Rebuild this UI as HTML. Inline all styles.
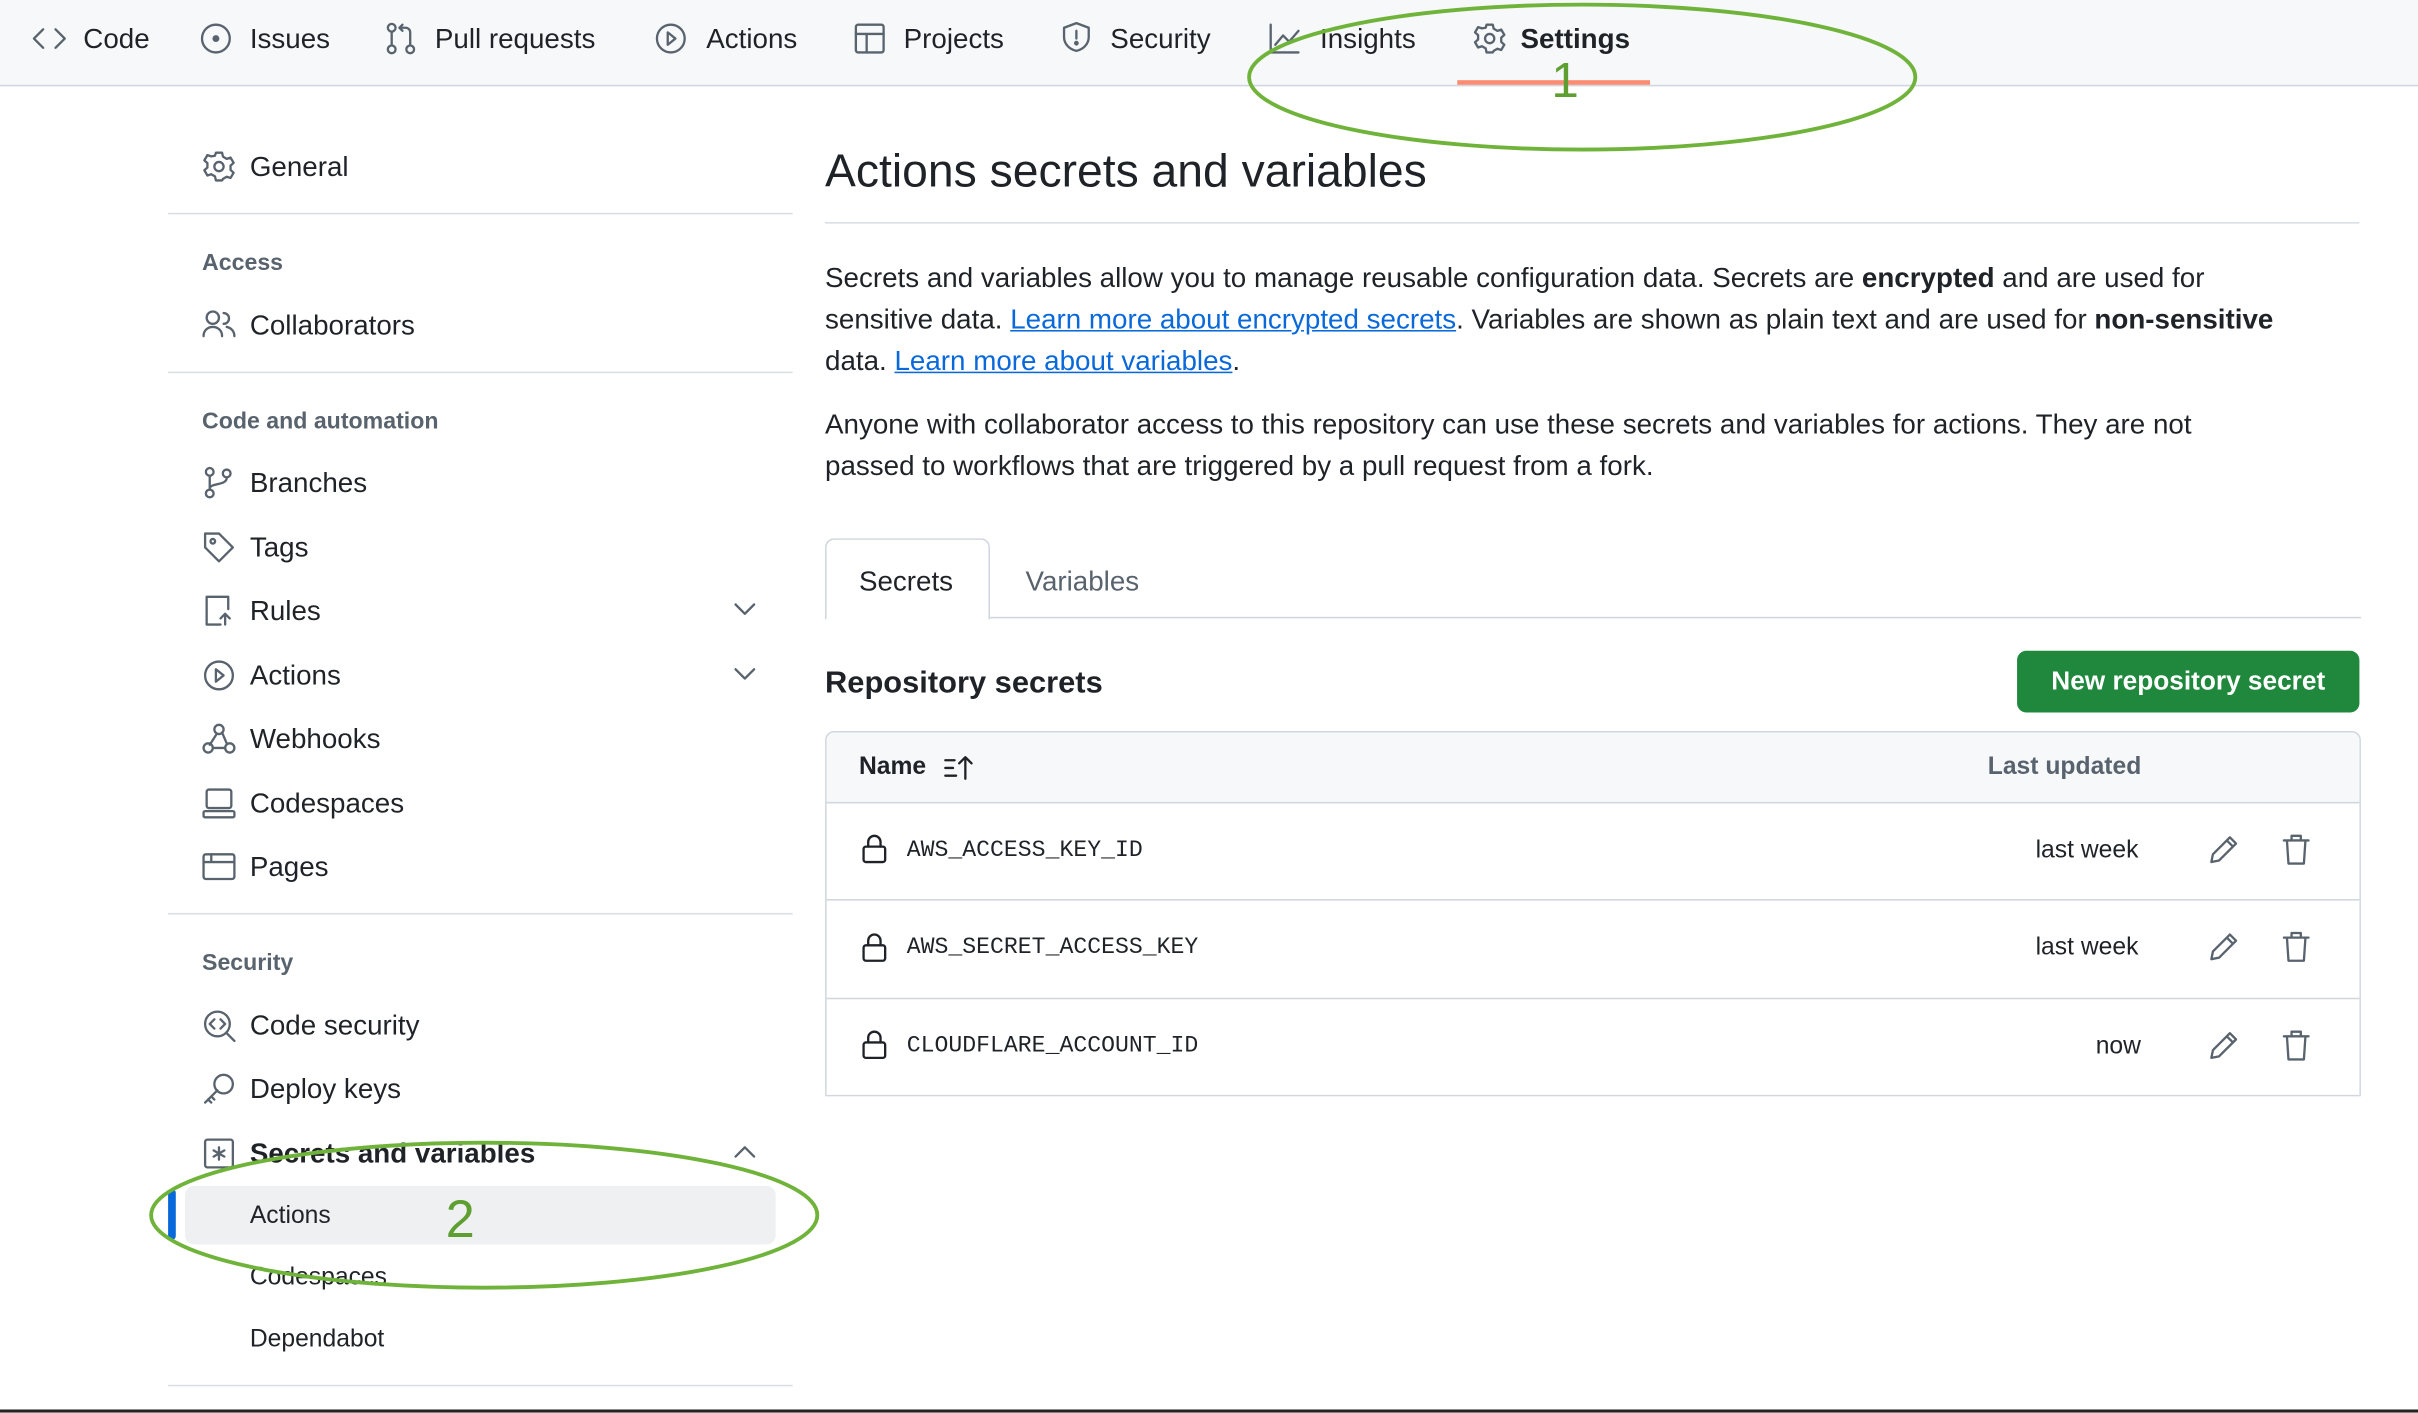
<!DOCTYPE html>
<html><head><meta charset="utf-8"><style>
html,body{margin:0;padding:0;background:#fff;overflow:hidden;width:2418px;height:1412px}
#w{position:absolute;left:0;top:0;width:1568px;height:916px;transform:scale(1.5421);transform-origin:0 0;font-family:"Liberation Sans",sans-serif;color:#1f2328}
.a{position:absolute;white-space:nowrap}
.nav{position:absolute;left:0;top:0;width:1568px;height:55px;background:#f6f8fa;border-bottom:1px solid #d0d7de}
.ni{font-size:18px;top:15px}
.ic{position:absolute;fill:none;stroke:#59636e;stroke-width:1.5;stroke-linecap:round;stroke-linejoin:round}
.s{font-size:18px}
.h{font-size:15px;font-weight:bold;color:#59636e}
.dv{position:absolute;left:109px;width:405px;height:1px;background:#d8dee4}
.p{font-size:18px;line-height:27px}
a{color:#0969da;text-decoration:underline}
.mono{font-family:"Liberation Mono",monospace;font-size:15px}
</style></head><body><div id="w">
<div class="nav"></div>
<svg class="ic" style="left:21px;top:16px" width="22" height="18" viewBox="0 0 22 18"><path d="M7 3L1 9l6 6M15 3l6 6-6 6"/></svg>
<div class="a ni" style="left:54px">Code</div>
<svg class="ic" style="left:129px;top:14px" width="22" height="22" viewBox="0 0 22 22"><circle cx="11" cy="11" r="9"/><circle cx="11" cy="11" r="1.5" fill="#59636e"/></svg>
<div class="a ni" style="left:162px">Issues</div>
<svg class="ic" style="left:249px;top:14px" width="22" height="22" viewBox="0 0 22 22"><circle cx="5" cy="4" r="2.5"/><circle cx="5" cy="18" r="2.5"/><circle cx="17" cy="18" r="2.5"/><path d="M5 7v8M17 15V7a3 3 0 0 0-3-3h-4M12 2l-2 2 2 2"/></svg>
<div class="a ni" style="left:282px">Pull requests</div>
<svg class="ic" style="left:424px;top:14px" width="22" height="22" viewBox="0 0 22 22"><circle cx="11" cy="11" r="9"/><path d="M9 7l5 4-5 4z"/></svg>
<div class="a ni" style="left:458px">Actions</div>
<svg class="ic" style="left:553px;top:14px" width="22" height="22" viewBox="0 0 22 22"><rect x="2" y="2" width="18" height="18" rx="1.5"/><path d="M2 8h18M9 8v12"/></svg>
<div class="a ni" style="left:586px">Projects</div>
<svg class="ic" style="left:687px;top:13px" width="22" height="22" viewBox="0 0 22 22"><path d="M11 2l8 3v6c0 5-4 8-8 9-4-1-8-4-8-9V5z M11 7v5"/><circle cx="11" cy="15" r=".8" fill="#59636e"/></svg>
<div class="a ni" style="left:720px">Security</div>
<svg class="ic" style="left:822px;top:14px" width="22" height="22" viewBox="0 0 22 22"><path d="M2 2v18h18M5 15l5-6 4 4 6-7"/></svg>
<div class="a ni" style="left:856px">Insights</div>
<svg class="ic" style="left:955px;top:14px" width="22" height="22" viewBox="0 0 22 22"><circle cx="11" cy="11" r="3"/><path d="M9 2h4l.6 2.6 2.4 1.4 2.5-.8 2 3.4-2 1.8v2.8l2 1.8-2 3.4-2.5-.8-2.4 1.4L13 20H9l-.6-2.6-2.4-1.4-2.5.8-2-3.4 2-1.8V8.8l-2-1.8 2-3.4 2.5.8L8.4 4z"/></svg>
<div class="a ni" style="left:986px;font-weight:bold">Settings</div>
<div class="a" style="left:945px;top:52px;width:125px;height:3px;background:#fd8c73"></div>

<!-- sidebar -->
<svg class="ic" style="left:131px;top:97px" width="22" height="22" viewBox="0 0 22 22"><circle cx="11" cy="11" r="3"/><path d="M9 2h4l.6 2.6 2.4 1.4 2.5-.8 2 3.4-2 1.8v2.8l2 1.8-2 3.4-2.5-.8-2.4 1.4L13 20H9l-.6-2.6-2.4-1.4-2.5.8-2-3.4 2-1.8V8.8l-2-1.8 2-3.4 2.5.8L8.4 4z"/></svg>
<div class="a s" style="left:162px;top:98px">General</div>
<div class="dv" style="top:138px"></div>
<div class="a h" style="left:131px;top:162px">Access</div>
<svg class="ic" style="left:131px;top:200px" width="22" height="20" viewBox="0 0 22 20"><circle cx="7" cy="6" r="4"/><path d="M1 18c0-4 3-6 6-6s6 2 6 6M14 3a3.5 3.5 0 0 1 0 7M16 12c3 .5 5 3 5 6"/></svg>
<div class="a s" style="left:162px;top:201px">Collaborators</div>
<div class="dv" style="top:241px"></div>
<div class="a h" style="left:131px;top:265px">Code and automation</div>
<svg class="ic" style="left:131px;top:302px" width="22" height="22" viewBox="0 0 22 22"><circle cx="5" cy="4" r="2.5"/><circle cx="5" cy="18" r="2.5"/><circle cx="16" cy="5" r="2.5"/><path d="M5 7v8M16 8c0 5-11 3-11 7"/></svg>
<div class="a s" style="left:162px;top:303px">Branches</div>
<svg class="ic" style="left:131px;top:344px" width="22" height="22" viewBox="0 0 22 22"><path d="M2 2h9l9 9-9 9-9-9z"/><circle cx="7" cy="7" r="1.5"/></svg>
<div class="a s" style="left:162px;top:345px">Tags</div>
<svg class="ic" style="left:131px;top:385px" width="22" height="22" viewBox="0 0 22 22"><path d="M12 20H3V2h14v8M15 20v-7M12 16l3-3 3 3"/></svg>
<div class="a s" style="left:162px;top:386px">Rules</div>
<svg class="ic" style="left:476px;top:390px" width="14" height="10" viewBox="0 0 14 10"><path d="M1 2l6 6 6-6"/></svg>
<svg class="ic" style="left:131px;top:427px" width="22" height="22" viewBox="0 0 22 22"><circle cx="11" cy="11" r="9"/><path d="M9 7l5 4-5 4z"/></svg>
<div class="a s" style="left:162px;top:428px">Actions</div>
<svg class="ic" style="left:476px;top:432px" width="14" height="10" viewBox="0 0 14 10"><path d="M1 2l6 6 6-6"/></svg>
<svg class="ic" style="left:131px;top:468px" width="22" height="22" viewBox="0 0 22 22"><circle cx="11" cy="5" r="3"/><circle cx="4" cy="17" r="3"/><circle cx="18" cy="17" r="3"/><path d="M9.5 8L5 15M7 17h8M13 7l3 7"/></svg>
<div class="a s" style="left:162px;top:469px">Webhooks</div>
<svg class="ic" style="left:131px;top:510px" width="22" height="22" viewBox="0 0 22 22"><rect x="3" y="2" width="16" height="12" rx="1.5"/><rect x="1" y="16" width="20" height="4" rx="1"/></svg>
<div class="a s" style="left:162px;top:511px">Codespaces</div>
<svg class="ic" style="left:131px;top:551px" width="22" height="22" viewBox="0 0 22 22"><rect x="1" y="3" width="20" height="16" rx="1.5"/><path d="M1 8h20M6 3v5"/></svg>
<div class="a s" style="left:162px;top:552px">Pages</div>
<div class="dv" style="top:592px"></div>
<div class="a h" style="left:131px;top:616px">Security</div>
<svg class="ic" style="left:131px;top:654px" width="22" height="22" viewBox="0 0 22 22"><circle cx="10" cy="10" r="8"/><path d="M8 7l-3 3 3 3M12 7l3 3-3 3M16 16l5 5"/></svg>
<div class="a s" style="left:162px;top:655px">Code security</div>
<svg class="ic" style="left:131px;top:695px" width="22" height="22" viewBox="0 0 22 22"><circle cx="14" cy="8" r="6"/><path d="M10 12l-8 8M4 18l2 2M6 16l2 2"/></svg>
<div class="a s" style="left:162px;top:696px">Deploy keys</div>
<svg class="ic" style="left:131px;top:737px" width="22" height="22" viewBox="0 0 22 22"><rect x="2" y="2" width="18" height="18" rx="1.5"/><path d="M11 7v8M7.5 9l7 4M14.5 9l-7 4"/></svg>
<div class="a s" style="left:162px;top:738px;font-weight:bold">Secrets and variables</div>
<svg class="ic" style="left:476px;top:742px" width="14" height="10" viewBox="0 0 14 10"><path d="M1 8l6-6 6 6"/></svg>
<div class="a" style="left:120px;top:769px;width:383px;height:38px;background:#eef0f2;border-radius:6px"></div>
<div class="a" style="left:109px;top:771px;width:5px;height:33px;background:#0969da;border-radius:3px"></div>
<div class="a" style="left:162px;top:780px;font-size:16px">Actions</div>
<div class="a" style="left:162px;top:820px;font-size:16px">Codespaces</div>
<div class="a" style="left:162px;top:860px;font-size:16px">Dependabot</div>
<div class="dv" style="top:898px"></div>

<!-- main -->
<div class="a" style="left:535px;top:95px;font-size:30px">Actions secrets and variables</div>
<div class="a" style="left:535px;top:144px;width:995px;height:1px;background:#d8dee4"></div>
<div class="a p" style="left:535px;top:167px">Secrets and variables allow you to manage reusable configuration data. Secrets are <b>encrypted</b> and are used for<br>sensitive data. <a>Learn more about encrypted secrets</a>. Variables are shown as plain text and are used for <b>non-sensitive</b><br>data. <a>Learn more about variables</a>.</div>
<div class="a p" style="left:535px;top:262px">Anyone with collaborator access to this repository can use these secrets and variables for actions. They are not<br>passed to workflows that are triggered by a pull request from a fork.</div>
<div class="a" style="left:535px;top:400px;width:996px;height:1px;background:#d0d7de"></div>
<div class="a" style="left:535px;top:349px;width:105px;height:51px;border:1px solid #d0d7de;border-bottom:1px solid #fff;border-radius:6px 6px 0 0;background:#fff"></div>
<div class="a s" style="left:557px;top:367px">Secrets</div>
<div class="a s" style="left:665px;top:367px;color:#59636e">Variables</div>
<div class="a" style="left:535px;top:432px;font-size:20px;font-weight:bold">Repository secrets</div>
<div class="a" style="left:1308px;top:422px;width:222px;height:40px;background:#1f883d;border-radius:6px;color:#fff;font-size:17px;font-weight:bold;text-align:center;line-height:40px">New repository secret</div>
<div class="a" style="left:535px;top:474px;width:994px;height:236px;border:1px solid #d0d7de;border-bottom:none;border-radius:6px 6px 0 0;overflow:hidden">
 <div style="position:absolute;left:0;top:0;width:100%;height:45px;background:#f6f8fa;border-bottom:1px solid #d0d7de"></div>
 <div class="a" style="left:21px;top:14px;font-size:16px;font-weight:bold">Name</div>
 <svg class="ic" style="left:76px;top:14px;stroke:#1f2328" width="22" height="18" viewBox="0 0 22 18"><path d="M1 4h6M1 9h5M1 14h7M14 16V2M10 6l4-4 4 4"/></svg>
 <div class="a" style="left:753px;top:14px;font-size:16px;font-weight:bold;color:#59636e">Last updated</div>
 <div style="position:absolute;left:0;top:108px;width:100%;height:1px;background:#d0d7de"></div>
 <div style="position:absolute;left:0;top:172px;width:100%;height:1px;background:#d0d7de"></div>
 <div style="position:absolute;left:0;top:235px;width:100%;height:1px;background:#d0d7de"></div>
</div>
<svg class="ic" style="left:558px;top:540px;stroke:#1f2328" width="18" height="20" viewBox="0 0 18 20"><rect x="2" y="9" width="14" height="10" rx="1.5"/><path d="M5 9V6a4 4 0 0 1 8 0v3"/></svg>
<div class="a mono" style="left:588px;top:543px">AWS_ACCESS_KEY_ID</div>
<div class="a" style="left:1320px;top:543px;font-size:16px">last week</div>
<svg class="ic" style="left:558px;top:604px;stroke:#1f2328" width="18" height="20" viewBox="0 0 18 20"><rect x="2" y="9" width="14" height="10" rx="1.5"/><path d="M5 9V6a4 4 0 0 1 8 0v3"/></svg>
<div class="a mono" style="left:588px;top:606px">AWS_SECRET_ACCESS_KEY</div>
<div class="a" style="left:1320px;top:606px;font-size:16px">last week</div>
<svg class="ic" style="left:558px;top:667px;stroke:#1f2328" width="18" height="20" viewBox="0 0 18 20"><rect x="2" y="9" width="14" height="10" rx="1.5"/><path d="M5 9V6a4 4 0 0 1 8 0v3"/></svg>
<div class="a mono" style="left:588px;top:670px">CLOUDFLARE_ACCOUNT_ID</div>
<div class="a" style="left:1359px;top:670px;font-size:16px">now</div>
<svg class="ic" style="left:1432px;top:541px" width="20" height="20" viewBox="0 0 20 20"><path d="M14 2l4 4L7 17l-5 1 1-5z M12 4l4 4"/></svg>
<svg class="ic" style="left:1480px;top:541px" width="18" height="20" viewBox="0 0 18 20"><path d="M1 4h16M6 4V1h6v3M3 4l1 15h10l1-15"/></svg>
<svg class="ic" style="left:1432px;top:604px" width="20" height="20" viewBox="0 0 20 20"><path d="M14 2l4 4L7 17l-5 1 1-5z M12 4l4 4"/></svg>
<svg class="ic" style="left:1480px;top:604px" width="18" height="20" viewBox="0 0 18 20"><path d="M1 4h16M6 4V1h6v3M3 4l1 15h10l1-15"/></svg>
<svg class="ic" style="left:1432px;top:668px" width="20" height="20" viewBox="0 0 20 20"><path d="M14 2l4 4L7 17l-5 1 1-5z M12 4l4 4"/></svg>
<svg class="ic" style="left:1480px;top:668px" width="18" height="20" viewBox="0 0 18 20"><path d="M1 4h16M6 4V1h6v3M3 4l1 15h10l1-15"/></svg>

<!-- annotations -->
<svg class="a" style="left:0;top:0" width="1568" height="916"><g fill="none" stroke="#6fb33a" stroke-width="2.5"><ellipse cx="1026" cy="50" rx="216" ry="47"/><ellipse cx="314" cy="788" rx="216" ry="47"/></g>
<text x="1006" y="63" font-family="Liberation Sans" font-size="32" fill="#5f9e30">1</text>
<text x="289" y="802" font-family="Liberation Sans" font-size="34" fill="#5f9e30">2</text></svg>
<div class="a" style="left:0;top:914px;width:1568px;height:2px;background:#222"></div>
</div></body></html>
